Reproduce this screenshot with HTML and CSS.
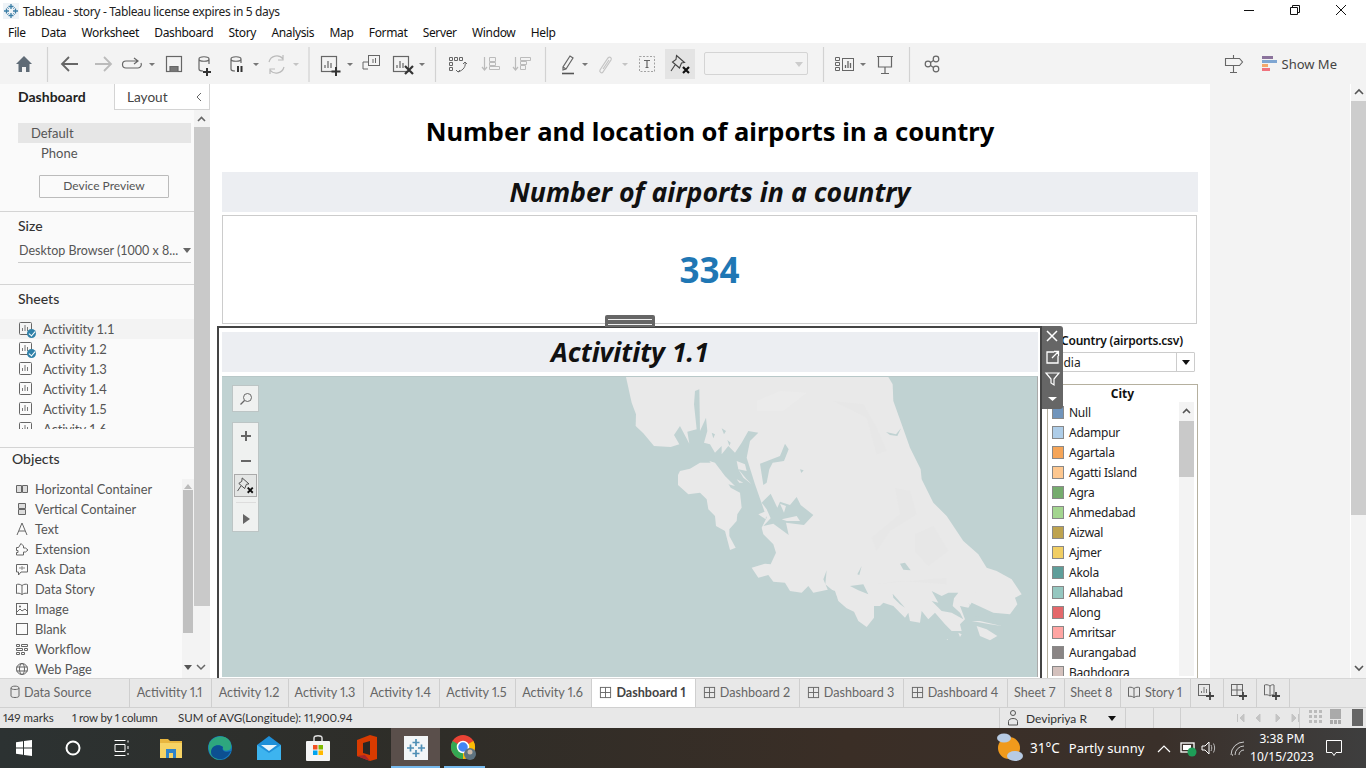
FILE: index.html
```html
<!DOCTYPE html>
<html lang="en">
<head>
<meta charset="utf-8">
<title>Tableau - story</title>
<link rel="stylesheet" href="styles.css">
</head>
<body>
<svg class="defs" width="0" height="0" aria-hidden="true">
  <defs>
    <symbol id="sheet" viewBox="0 0 18 18"><rect x="1.500" y="2.500" width="12" height="12" rx="1" fill="none" stroke="#666"/><path d="M4.500 11V8M7 11V5M9.500 11V7" stroke="#777" fill="none"/></symbol>
    <symbol id="dash" viewBox="0 0 14 14"><rect x="1.500" y="1.500" width="11" height="11" fill="none" stroke="#666"/><path d="M7 1.500v11M1.500 7h11" stroke="#666"/></symbol>
    <symbol id="pin" viewBox="0 0 26 26"><path d="M8.500 3.500L16.500 10.500 13.500 11 11.500 16 4.500 10 8 7.500ZM7 13L3 19" fill="none" stroke="#444" stroke-width="1.100"/><path d="M15 15l6 6M21 15l-6 6" stroke="#111" stroke-width="2.200"/></symbol>
  </defs>
</svg>

<header class="titlebar">
  <svg class="appicon" width="16" height="16" viewBox="0 0 16 16"><rect width="16" height="16" fill="#eef3f7"/><path d="M8 1v5M5.500 3.500h5M8 10v5M5.500 12.500h5M1 8h5M3.500 5.500v5M10 8h5M12.500 5.500v5" stroke="#3b7ea6" stroke-width="1.300"/><path d="M4 4l2 2M12 4l-2 2M4 12l2-2M12 12l-2-2" stroke="#7aa6c2"/></svg>
  <span class="titletext">Tableau - story - Tableau license expires in 5 days</span>
  <div class="winbtns">
    <svg width="46" height="22" viewBox="0 0 46 22"><path d="M18 10.500h10" stroke="#111"/></svg>
    <svg width="46" height="22" viewBox="0 0 46 22"><path d="M18.500 7.500h7v7h-7zM20.500 7V5.500h7v7H26" fill="none" stroke="#111"/></svg>
    <svg width="46" height="22" viewBox="0 0 46 22"><path d="M18 5l10 10M28 5L18 15" stroke="#111"/></svg>
  </div>
</header>

<nav class="menubar">
  <span>File</span><span>Data</span><span>Worksheet</span><span>Dashboard</span><span>Story</span><span>Analysis</span><span>Map</span><span>Format</span><span>Server</span><span>Window</span><span>Help</span>
</nav>

<div class="toolbar">
  <svg class="tbicons" width="950" height="41" viewBox="0 43 950 41">
    <g fill="none" stroke="#666" stroke-width="1.200">
      <path d="M16 64l8-8 8 8h-2.500v8H26v-5h-4v5h-3.500v-8z" fill="#5f6b76" stroke="none"/>
      <path d="M47.500 47v35M309 47v35M435.500 47v35M545.500 47v35M823.500 47v35M909.500 47v35" stroke="#d2d2d2"/>
      <path d="M78 64H63M69 57l-7 7 7 7" stroke="#666" stroke-width="1.800"/>
      <path d="M95 64h15M104 57l7 7-7 7" stroke="#bbb" stroke-width="1.800"/>
      <path d="M137 61h-11a3.500 3.500 0 0 0 0 7h12a3.500 3.500 0 0 0 3-5M134 58l4 3-4 3"/>
      <rect x="166.500" y="56.500" width="15" height="15"/><path d="M170 71.500v-5h8v5" fill="#777"/>
      <path d="M199 59c0-3 10-3 10 0v5M199 59v10c0 1.500 2 2 4 2M199 59c0 3 10 3 10 0"/>
      <path d="M207 68v8M203 72h8" stroke="#333" stroke-width="2"/>
      <path d="M231 59c0-3 10-3 10 0v4M231 59v10c0 1.500 2 2 4 2M231 59c0 3 10 3 10 0"/>
      <path d="M238 66v6M241.500 66v6" stroke="#333" stroke-width="2"/>
      <path d="M269 62a8 8 0 0 1 14-3M284 67a8 8 0 0 1-14 3M283 55v5h-5M270 74v-5h5" stroke="#bbb"/>
      <rect x="321.500" y="56.500" width="15" height="15"/><path d="M325 68v-3M328 68v-7M331 68v-5"/>
      <path d="M336 67v9M331.500 71.500h9" stroke="#333" stroke-width="2"/>
      <rect x="368.500" y="55.500" width="11" height="10" stroke-width="1"/><path d="M368 69h-5v-7h5M373 63v-4M375.500 63v-5" stroke-width="1"/>
      <rect x="393.500" y="56.500" width="15" height="15"/><path d="M397 68v-3M400 68v-7M403 68v-5"/>
      <path d="M405 66l8 8M413 66l-8 8" stroke="#333" stroke-width="2.200"/>
      <path d="M449.500 57.500h3v3h-3zM454.500 57.500h3v3h-3zM459.500 57.500h3v3h-3zM449.500 62.500h3v3h-3zM449.500 67.500h3v3h-3z" stroke-width="1"/>
      <path d="M465 62c1 4-1 8-7 10M456 70l2 2 2-2M463 64l2-2 2 2" stroke-width="1"/>
      <path d="M484.500 57v13M482 67l2.500 3 2.500-3" stroke="#bbb"/><path d="M489.500 57.500h6v4h-6zM489.500 62.500h6v3h-6zM489.500 66.500h10v3h-10z" stroke="#bbb" stroke-width="1"/>
      <path d="M515.500 57v13M513 67l2.500 3 2.500-3" stroke="#bbb"/><path d="M520.500 57.500h10v3h-10zM520.500 61.500h6v3h-6zM520.500 65.500h5v4h-5z" stroke="#bbb" stroke-width="1"/>
      <path d="M563 70l3-1 7-11-3-2-7 11zM566 69l-3-2" stroke="#666"/><path d="M562 73.500h12" stroke="#555" stroke-width="1.600"/>
      <path d="M600 70l8-12c2-2 4 0 3 2l-8 12c-1 2-4 0-3-2zM603 69l6-9" stroke="#c4c4c4"/>
      <rect x="639.500" y="56.500" width="15" height="15" stroke="#999" stroke-width=".9" stroke-dasharray="2 1.500"/><path d="M644 60.500h6M647 60.500v7M645.500 67.500h3" stroke="#666"/>
      <path d="M835.500 57.500h4v3h-4zM835.500 62.500h4v3h-4zM835.500 67.500h4v3h-4z" stroke-width="1"/><rect x="842.500" y="58.500" width="11" height="12" stroke-width="1"/><path d="M845.500 68v-3M848 68v-7M850.500 68v-5" stroke-width="1.300"/>
      <path d="M877 56.500h16M878.500 57v10h13V57M885 67v6M881 73.500h8"/>
      <circle cx="928" cy="64" r="2.800"/><circle cx="936" cy="59" r="2.800"/><circle cx="936" cy="69" r="2.800"/><path d="M930.500 62.500l3-2M930.500 65.500l3 2"/>
    </g>
    <g fill="#777">
      <path d="M149 63h6l-3 3z M253 63h6l-3 3z M347 63h6l-3 3z M419 63h6l-3 3z M582 63h6l-3 3z M860 63h6l-3 3z"/>
      <path d="M293 63h6l-3 3z M622 63h6l-3 3z" fill="#c4c4c4"/>
    </g>
    <rect x="665" y="49" width="30" height="30" fill="#e4e4e4"/>
    <use href="#pin" x="668" y="52" width="26" height="26"/>
  </svg>
  <div class="tbselect"><span class="tbcaret"></span></div>
  <div class="tbright">
    <svg width="22" height="22" viewBox="0 0 22 22"><path d="M2.500 5.500h14l3 3.500-3 3.500h-14zM10.500 2v3M10.500 12.500V19M7 19.500h7" fill="none" stroke="#666" stroke-width="1.100"/></svg>
    <div class="showme">
      <svg width="15" height="16" viewBox="0 0 15 16"><rect width="11" height="3" fill="#8b739c"/><rect y="4" width="15" height="3" fill="#7fa6d2"/><rect y="8" width="6" height="3" fill="#f3a86c"/><rect y="12" width="8" height="3" fill="#f0737e"/></svg>
      <span>Show Me</span>
    </div>
  </div>
</div>

<main class="main">
  <aside class="sidebar">
    <div class="sidetabs">
      <div class="sidetab active">Dashboard</div>
      <div class="sidetab">Layout<svg class="collapse" width="8" height="10" viewBox="0 0 8 10"><path d="M6 1L2 5l4 4" fill="none" stroke="#666"/></svg></div>
    </div>
    <div class="sidebody">
      <div class="sidecol">
        <section class="sec sec-device">
          <div class="devrow sel">Default</div>
          <div class="devrow phone">Phone</div>
          <button class="devbtn">Device Preview</button>
        </section>
        <section class="sec sec-size">
          <h3>Size</h3>
          <div class="sizesel"><span>Desktop Browser (1000 x 8...</span><i class="caret"></i></div>
        </section>
        <section class="sec sec-sheets">
          <h3>Sheets</h3>
          <ul class="sheetlist">
            <li class="hover"><span class="sicon"><svg width="18" height="18"><use href="#sheet"/></svg><b class="check"></b></span>Activitity 1.1</li>
            <li><span class="sicon"><svg width="18" height="18"><use href="#sheet"/></svg><b class="check"></b></span>Activity 1.2</li>
            <li><span class="sicon"><svg width="18" height="18"><use href="#sheet"/></svg></span>Activity 1.3</li>
            <li><span class="sicon"><svg width="18" height="18"><use href="#sheet"/></svg></span>Activity 1.4</li>
            <li><span class="sicon"><svg width="18" height="18"><use href="#sheet"/></svg></span>Activity 1.5</li>
            <li><span class="sicon"><svg width="18" height="18"><use href="#sheet"/></svg></span>Activity 1.6</li>
          </ul>
        </section>
        <section class="sec-objects">
          <h3>Objects</h3>
          <div class="objwrap">
            <ul class="objlist">
              <li><svg width="14" height="14" viewBox="0 0 14 14"><path d="M1.500 3.500h5v7h-5zM7.500 3.500h5v7h-5z" fill="#ddd" stroke="#666"/></svg>Horizontal Container</li>
              <li><svg width="14" height="14" viewBox="0 0 14 14"><path d="M3.500 1.500h7v5h-7zM3.500 7.500h7v5h-7z" fill="#ddd" stroke="#666"/></svg>Vertical Container</li>
              <li><svg width="14" height="14" viewBox="0 0 14 14"><path d="M2 13L7 1l5 12M4 9h6" fill="none" stroke="#666"/></svg>Text</li>
              <li><svg width="14" height="14" viewBox="0 0 14 14"><path d="M1.500 5.500h2L6 1.500l2.500 2.500v2h2l2.500 2-2.500 2h-2v3h-7v-2.500H3V8.500H1.500z" fill="none" stroke="#666"/></svg>Extension</li>
              <li><svg width="14" height="14" viewBox="0 0 14 14"><path d="M1.500 2.500h11v7.500H6l-2.500 3V10h-2z" fill="none" stroke="#666"/><path d="M4 6h6M7 4v4" stroke="#888"/></svg>Ask Data</li>
              <li><svg width="14" height="14" viewBox="0 0 14 14"><path d="M7 3.500C5 2 3 2 1.500 2.500v9C3 11 5 11 7 12.500c2-1.500 4-1.500 5.500-1v-9C11 2 9 2 7 3.500zM7 3.500v9" fill="none" stroke="#666"/></svg>Data Story</li>
              <li><svg width="14" height="14" viewBox="0 0 14 14"><rect x="1.500" y="1.500" width="11" height="11" fill="none" stroke="#666"/><path d="M2 10l3-3 2 2 3-2 2 2" fill="none" stroke="#666"/><circle cx="5" cy="4.500" r="1" fill="#666"/></svg>Image</li>
              <li><svg width="14" height="14" viewBox="0 0 14 14"><rect x="1.500" y="1.500" width="11" height="11" fill="none" stroke="#666"/></svg>Blank</li>
              <li><svg width="14" height="14" viewBox="0 0 14 14"><path d="M1.500 2.500h3v2h-3zM6.500 2.500h6v2h-6zM1.500 6.500h6v2h-6zM9.500 6.500h3v2h-3zM1.500 10.500h3v2h-3zM6.500 10.500h3v2h-3z" fill="none" stroke="#666"/></svg>Workflow</li>
              <li><svg width="14" height="14" viewBox="0 0 14 14"><circle cx="7" cy="7" r="5.500" fill="none" stroke="#666"/><ellipse cx="7" cy="7" rx="2.500" ry="5.500" fill="none" stroke="#666"/><path d="M1.500 5h11M1.500 9h11" stroke="#666"/></svg>Web Page</li>
            </ul>
            <div class="objscroll"><i class="up"></i><b></b><i class="down"></i></div>
          </div>
        </section>
      </div>
      <div class="sidescroll">
        <svg width="15" height="16" viewBox="0 0 15 16"><path d="M4 10l3.500-3.500L11 10" fill="none" stroke="#666" stroke-width="1.600"/></svg>
        <div class="sidethumb"></div>
        <svg class="sidedown" width="15" height="12" viewBox="0 0 15 12"><path d="M3 3l4 4 4-4" fill="none" stroke="#666" stroke-width="1.500"/></svg>
      </div>
    </div>
  </aside>

  <section class="canvas">
    <h1 class="dashtitle">Number and location of airports in a country</h1>
    <h2 class="band">Number of airports in a country</h2>
    <div class="kpi">334</div>
    <div class="handle"></div>
    <div class="lower">
      <div class="frame">
        <h2 class="band framed">Activitity 1.1</h2>
        <div class="map">
          <svg class="mapsvg" width="816" height="301" viewBox="222 376 816 301">
            <g transform="translate(600 370) scale(.33333)">
              <g fill="#e9e9e9">
                <path d="M78 18H865L878 40 880 90 905 160 930 230 962 295 965 325 1000 395 1040 435 1090 510 1135 550 1160 590 1190 600 1235 625 1265 670 1245 680 1252 700 1230 730 1180 725 1115 695 1105 710 1080 705 1095 745 1080 760 1085 780 1055 780 1035 760 1005 725 985 745 965 720 960 755 930 750 925 725 915 740 900 725 880 705 850 695 840 705 822 705 822 740 800 768 775 750 762 722 740 712 715 690 705 660 690 655 640 665 625 645 605 665 570 660 555 635 520 632 505 612 475 620 455 590 495 578 512 580 528 545 520 520 490 490 485 470 500 440 465 340 440 260 450 210 475 185 445 180 425 215 405 245 385 225 365 250 365 225 345 245 330 220 312 215 322 180 318 140 300 180 298 55 285 60 282 100 290 175 262 182 268 218 240 165 222 192 238 220 212 228 162 225 130 187 107 165 108 130 95 95Z"/>
                <path d="M240 300 270 293 300 275 340 275 362 300 392 350 420 365 425 410 412 430 410 450 388 475 388 495 407 530 390 537 375 480 348 465 345 435 325 415 320 385 300 365 265 370 234 342 234 312Z"/>
                <path d="M328 270 345 275 375 315 405 345 385 340 360 315Z M410 270 435 280 440 300 415 295Z M415 295 440 325 455 340 430 320Z M410 325 430 335 418 335Z"/>
              </g>
              <g fill="#c0d2d2">
                <path d="M335 185 345 190 340 202Z M365 172 378 180 372 190Z M382 207 392 215 388 224Z"/>
                <path d="M480 278 515 265 540 255 555 218 566 235 552 270 518 275 508 295 500 335 490 342Z"/>
                <path d="M600 295 611 298 604 306Z M900 578 915 575 932 598 910 596Z M858 183 888 190 903 172 892 195 870 192Z"/>
                <path d="M512 368 520 385 532 410 540 392 570 402 590 378 602 402 640 432 612 462 558 455 566 492 520 458 490 465 512 442 500 415 485 395Z"/>
                <path d="M750 645 790 640 805 670 775 658Z M772 610 785 585 778 612Z"/>
                <path d="M670 625 680 598 676 640 700 660 712 680 690 672Z"/>
                <path d="M995 660 1025 675 1045 665 1075 665 1062 682 1058 705 1080 725 1090 745 1055 725 1025 720 995 690 1015 695Z M878 668 915 710 900 700 880 680Z M1105 695 1125 725 1170 735 1205 760 1170 745 1125 735Z"/>
              </g>
              <g fill="#e9e9e9">
                <path d="M545 445 590 435 600 450 560 450Z M475 430 500 420 497 445Z M540 398 558 405 552 425Z"/>
                <path d="M1130 765 1160 775 1192 795 1170 808 1140 795Z M1115 750 1140 750 1205 765 1170 760Z M1075 785 1085 790 1080 798Z M1128 655 1135 665 1122 662Z M1040 804 1044 804 1042 807Z"/>
              </g>
              <path d="M700 90 790 100 830 170 860 240 830 250 800 140ZM885 350 930 360 950 430 870 480 830 540 815 500 900 430ZM945 490 1000 465 1045 540 985 585 945 540ZM820 640 1040 620 1040 640 900 630Z" fill="#e7e7e7"/>
              <path d="M540 60 620 65 550 120 470 120 470 90Z" fill="#ebebeb"/>
            </g>
          </svg>
          <div class="mapctl search">
            <svg width="16" height="16" viewBox="0 0 16 16"><circle cx="9.500" cy="6.500" r="4" fill="none" stroke="#666"/><path d="M6.500 9.500L2.500 13.500" stroke="#666" stroke-width="1.300"/></svg>
          </div>
          <div class="mapctl group">
            <svg class="ctl-plus" width="12" height="12" viewBox="0 0 12 12"><path d="M6 1v10M1 6h10" stroke="#666" stroke-width="2"/></svg>
            <svg class="ctl-minus" width="12" height="12" viewBox="0 0 12 12"><path d="M1 6h10" stroke="#666" stroke-width="2"/></svg>
            <div class="ctl-pin"><svg width="22" height="22"><use href="#pin"/></svg></div>
            <div class="ctl-sep"></div>
            <svg class="ctl-play" width="10" height="12" viewBox="0 0 10 12"><path d="M2 1l7 5-7 5z" fill="#666"/></svg>
          </div>
        </div>
      </div>
      <div class="rightcol">
        <div class="filtertitle">Country (airports.csv)</div>
        <div class="combo"><span class="combotext">India</span><span class="combobtn"><i class="caret dark"></i></span></div>
        <div class="legend">
          <div class="legendtitle">City</div>
          <div class="legendbody">
            <ul class="legendlist">
              <li><i class="sw s1"></i>Null</li>
              <li><i class="sw s2"></i>Adampur</li>
              <li><i class="sw s3"></i>Agartala</li>
              <li><i class="sw s4"></i>Agatti Island</li>
              <li><i class="sw s5"></i>Agra</li>
              <li><i class="sw s6"></i>Ahmedabad</li>
              <li><i class="sw s7"></i>Aizwal</li>
              <li><i class="sw s8"></i>Ajmer</li>
              <li><i class="sw s9"></i>Akola</li>
              <li><i class="sw s10"></i>Allahabad</li>
              <li><i class="sw s11"></i>Along</li>
              <li><i class="sw s12"></i>Amritsar</li>
              <li><i class="sw s13"></i>Aurangabad</li>
              <li><i class="sw s14"></i>Baghdogra</li>
            </ul>
            <div class="legscroll">
              <svg width="15" height="19" viewBox="0 0 15 19"><path d="M4 11l3.500-3.500L11 11" fill="none" stroke="#555" stroke-width="1.600"/></svg>
              <div class="legthumb"></div>
            </div>
          </div>
        </div>
      </div>
      <div class="zonebar">
        <svg width="21" height="21" viewBox="0 0 21 21"><path d="M5 5l10 10M15 5L5 15" stroke="#fff" stroke-width="1.500"/></svg>
        <svg width="21" height="21" viewBox="0 0 21 21"><path d="M12 5H5v11h11V9M10 11l6-6M12 4.500h4.500V9" fill="none" stroke="#fff" stroke-width="1.300"/></svg>
        <svg width="21" height="22" viewBox="0 0 21 22"><path d="M4 5h13l-5 6v6l-3-2v-4z" fill="none" stroke="#fff" stroke-width="1.200"/></svg>
        <svg width="21" height="18" viewBox="0 0 21 18"><path d="M6 7h9l-4.500 4z" fill="#fff"/></svg>
      </div>
    </div>
  </section>

  <div class="gutter"></div>
  <div class="pagescroll">
    <svg width="16" height="17" viewBox="0 0 16 17"><path d="M4 10l4-4 4 4" fill="none" stroke="#555" stroke-width="1.600"/></svg>
    <div class="pagethumb"></div>
    <svg class="pagedown" width="16" height="16" viewBox="0 0 16 16"><path d="M4 6l4 4 4-4" fill="none" stroke="#555" stroke-width="1.600"/></svg>
  </div>
</main>

<div class="tabs">
  <div class="tab w-ds"><svg width="12" height="14" viewBox="0 0 12 14"><path d="M2 3c0-2.500 8-2.500 8 0v8c0 2-8 2-8 0zM2 3c0 2 8 2 8 0" fill="none" stroke="#666"/></svg>Data Source</div>
  <div class="tab w-a0">Activitity 1.1</div>
  <div class="tab w-a1">Activity 1.2</div>
  <div class="tab w-a2">Activity 1.3</div>
  <div class="tab w-a3">Activity 1.4</div>
  <div class="tab w-a3">Activity 1.5</div>
  <div class="tab w-a3">Activity 1.6</div>
  <div class="tab w-d current"><svg width="13" height="13"><use href="#dash"/></svg>Dashboard 1</div>
  <div class="tab w-d"><svg width="13" height="13"><use href="#dash"/></svg>Dashboard 2</div>
  <div class="tab w-d"><svg width="13" height="13"><use href="#dash"/></svg>Dashboard 3</div>
  <div class="tab w-d"><svg width="13" height="13"><use href="#dash"/></svg>Dashboard 4</div>
  <div class="tab w-s">Sheet 7</div>
  <div class="tab w-s">Sheet 8</div>
  <div class="tab w-st"><svg width="14" height="14" viewBox="0 0 14 14"><path d="M7 3.500C5 2 3 2 1.500 2.500v9C3 11 5 11 7 12.500c2-1.500 4-1.500 5.500-1v-9C11 2 9 2 7 3.500zM7 3.500v9" fill="none" stroke="#666"/></svg>Story 1</div>
  <div class="tab w-n"><svg width="18" height="18" viewBox="0 0 18 18"><rect x="1.500" y="1.500" width="11" height="11" fill="none" stroke="#666"/><path d="M4.500 10V8M7 10V4M9.500 10V6" stroke="#777"/><path d="M13 9v8M9 13h8" stroke="#444" stroke-width="1.800"/></svg></div>
  <div class="tab w-n"><svg width="18" height="18" viewBox="0 0 18 18"><rect x="1.500" y="1.500" width="11" height="11" fill="none" stroke="#666"/><path d="M7 1.500v11M1.500 7h11" stroke="#666"/><path d="M13 9v8M9 13h8" stroke="#444" stroke-width="1.800"/></svg></div>
  <div class="tab w-n"><svg width="18" height="18" viewBox="0 0 18 18"><path d="M7 3C5 1.500 3 1.500 1.500 2v10C3 11.500 5 11.500 7 13c2-1.500 3-1.500 4-1V2C10 1.500 9 1.500 7 3zM7 3v10" fill="none" stroke="#666"/><path d="M13 9v8M9 13h8" stroke="#444" stroke-width="1.800"/></svg></div>
</div>

<div class="status">
  <span class="st1">149 marks</span><span class="st2">1 row by 1 column</span><span class="st3">SUM of AVG(Longitude): 11,900.94</span>
  <div class="stuser">
    <svg width="14" height="18" viewBox="0 0 14 18"><circle cx="7" cy="4" r="2.500" fill="none" stroke="#555"/><path d="M2.500 16v-3.500c0-2 2-3 4.500-3s4.500 1 4.500 3V16z" fill="none" stroke="#555"/></svg>
    <span class="stname">Devipriya R</span><i class="caret dark"></i>
  </div>
  <div class="stcell c1"></div><div class="stcell c2"></div>
  <div class="stnav">
    <svg width="70" height="12" viewBox="0 0 70 12"><path d="M2.500 2v8M9 2L5 6l4 4zM25 2l-4 4 4 4zM41 2l4 4-4 4zM57 2l4 4-4 4zM63.500 2v8" fill="#c4c4c4" stroke="#c4c4c4"/></svg>
  </div>
  <div class="stview">
    <svg width="60" height="18" viewBox="0 0 60 18"><path d="M1 1h3v3H1zM6 1h3v3H6zM11 1h3v3h-3zM1 6h3v3H1zM6 6h3v3H6zM11 6h3v3h-3zM1 11h3v3H1zM6 11h3v3H6zM11 11h3v3h-3z" fill="#bbb"/><path d="M22 0h11v10H22zM22 11h3v4h-3zM26 11h3v4h-3zM30 11h3v4h-3z" fill="#aaa"/><rect x="44" y="0" width="11" height="17" fill="#666"/></svg>
  </div>
</div>

<footer class="taskbar">
  <div class="tk"><svg width="16" height="16" viewBox="0 0 16 16"><path d="M0 2.200L7 1.200V7.500H0zM8 1L16 0V7.500H8zM0 8.500H7V14.800L0 13.800zM8 8.500H16V16L8 15z" fill="#fff"/></svg></div>
  <div class="tk"><svg width="16" height="16" viewBox="0 0 16 16"><circle cx="8" cy="8" r="6.500" fill="none" stroke="#fff" stroke-width="2"/></svg></div>
  <div class="tk"><svg width="16" height="16" viewBox="0 0 16 16"><path d="M.5 .5h11M.5 15.500h11M1 4.500h10v7H1zM14 .5v2M14 6v3M14 13v2" fill="none" stroke="#fff"/></svg></div>
  <div class="tk"><svg width="22" height="20" viewBox="0 0 22 20"><path d="M0 1h8l2 2h12v5H0z" fill="#e8b63f"/><rect y="5" width="22" height="15" fill="#f6d365"/><rect x="6" y="11" width="10" height="9" fill="#2f83c9"/><rect x="9" y="15" width="4" height="5" fill="#f6d365"/></svg></div>
  <div class="tk"><svg width="24" height="24" viewBox="0 0 24 24"><circle cx="12" cy="12" r="12" fill="#1479c0"/><path d="M1 8C4 0 16-2 21 4c3 4 3 9 0 10-4 2-7 0-6-3-3-3-10-2-11 4-1 5 5 8 10 8C6 26-1 17 1 8z" fill="#2ea77e"/><path d="M3 16c0-6 7-9 12-5-2 4 3 6 8 4-3 6-8 9-13 8-4-1-7-3-7-7z" fill="#0c4f91"/></svg></div>
  <div class="tk"><svg width="24" height="24" viewBox="0 0 24 24"><path d="M0 9L12 0l12 9v15H0z" fill="#1f8fd8"/><path d="M0 9l12 8 12-8v15H0z" fill="#3db4ef"/><path d="M4 9h16l-8 6z" fill="#e8f4fb"/></svg></div>
  <div class="tk"><svg width="24" height="26" viewBox="0 0 24 26"><path d="M8 7V3c0-3 8-3 8 0v4" fill="none" stroke="#ddd" stroke-width="1.500"/><rect y="6" width="24" height="20" rx="1" fill="#f4f4f4"/><rect x="7" y="10" width="4.500" height="4.500" fill="#f25022"/><rect x="12.500" y="10" width="4.500" height="4.500" fill="#7fba00"/><rect x="7" y="15.500" width="4.500" height="4.500" fill="#00a4ef"/><rect x="12.500" y="15.500" width="4.500" height="4.500" fill="#ffb900"/></svg></div>
  <div class="tk"><svg width="20" height="26" viewBox="0 0 20 26"><path d="M0 5L13 0l7 2v22l-7 2L0 21z" fill="#d83b01"/><path d="M6 8l7-2v14l-7-2z" fill="#2b2723"/><path d="M0 21l13 5-5-6z" fill="#a4262c"/></svg></div>
  <div class="tk active"><svg width="24" height="24" viewBox="0 0 24 24"><rect width="24" height="24" fill="#f2f5f7"/><path d="M12 3v7M8.500 6.500h7M12 14v7M8.500 17.500h7M3 12h7M6.500 8.500v7M14 12h7M17.500 8.500v7" stroke="#4f8fb5" stroke-width="1.700"/></svg></div>
  <div class="tk open"><svg width="26" height="26" viewBox="0 0 26 26"><circle cx="12" cy="12" r="12" fill="#ea4335"/><path d="M12 12L22.400 6A12 12 0 0 1 12 24z" fill="#fbbc05"/><path d="M12 12L12 24A12 12 0 0 1 1.600 6z" fill="#34a853"/><circle cx="12" cy="12" r="5.500" fill="#4285f4" stroke="#fff" stroke-width="1.500"/><circle cx="19" cy="19" r="6" fill="#5e7380"/><circle cx="19" cy="17" r="2.500" fill="#c9b8a8"/></svg></div>
  <div class="tray">
    <svg class="weather" width="28" height="32" viewBox="0 0 28 32"><circle cx="13" cy="16" r="11" fill="#f09a1c"/><ellipse cx="8" cy="6" rx="7" ry="4.500" fill="#b7cbe3"/><ellipse cx="19" cy="24" rx="8" ry="5" fill="#b7cbe3"/></svg>
    <span class="temp">31°C</span><span class="cond">Partly sunny</span>
    <svg class="chev" width="14" height="9" viewBox="0 0 14 9"><path d="M1 8l6-6 6 6" fill="none" stroke="#fff" stroke-width="1.200"/></svg>
    <svg class="ti1" width="18" height="16" viewBox="0 0 18 16"><rect x="1" y="2" width="13" height="9" fill="none" stroke="#fff" stroke-width="1.300"/><rect x="3" y="4" width="8" height="5" fill="#fff"/><circle cx="12" cy="11" r="4.500" fill="#1e9e57"/></svg>
    <svg class="ti2" width="16" height="16" viewBox="0 0 16 16"><path d="M1 6h3l4-4v12l-4-4H1z" fill="none" stroke="#fff"/><path d="M10 5c1 2 1 4 0 6M12.500 3.500c1.500 3 1.500 6 0 9" fill="none" stroke="#bbb"/></svg>
    <svg class="ti3" width="16" height="16" viewBox="0 0 16 16"><path d="M1 14A13 13 0 0 1 14 1M5 14a9 9 0 0 1 9-9M9 14a5 5 0 0 1 5-5" fill="none" stroke="#ccc"/><path d="M2 14l1 0" stroke="#fff"/></svg>
    <div class="clock"><span>3:38 PM</span><span>10/15/2023</span></div>
    <svg class="notif" width="18" height="18" viewBox="0 0 18 18"><path d="M1.500 1.500h15v12H11l-2 3-2-3H1.500z" fill="none" stroke="#fff"/></svg>
  </div>
</footer>
</body>
</html>
```

FILE: styles.css
```css
* { box-sizing: border-box; }
html, body { margin: 0; padding: 0; }
body {
  width: 1366px; height: 768px; overflow: hidden;
  display: flex; flex-direction: column;
  font-family: "Noto Sans", "Open Sans", sans-serif;
  font-size: 12px; color: #222; background: #fff;
}
ul { list-style: none; margin: 0; padding: 0; }
h1, h2, h3 { margin: 0; }
svg { display: block; flex: none; }
.defs { position: absolute; }

.titlebar { height: 22px; flex: none; display: flex; align-items: center; padding-left: 3px; font-size: 12px; letter-spacing: -.35px; }
.appicon { margin-right: 4px; }
.titletext { color: #222; padding-top: 1px; }
.winbtns { margin-left: auto; display: flex; margin-right: 2px; }

.menubar { height: 21px; flex: none; display: flex; align-items: center; padding-left: 8px; gap: 15.300px; font-size: 12px; color: #111; letter-spacing: -.35px; }

.toolbar { height: 41px; flex: none; background: #f3f3f3; display: flex; align-items: center; position: relative; }
.tbicons { position: absolute; left: 0; top: 0; }
.tbselect { margin-left: 704px; width: 104px; height: 23px; border: 1px solid #d4d4d4; border-radius: 2px; background: #f3f3f3; position: relative; z-index: 1; }
.tbcaret { position: absolute; right: 4px; top: 9px; border: 4px solid transparent; border-top: 5px solid #ccc; }
.tbright { margin-left: auto; display: flex; align-items: center; gap: 17px; padding-right: 29px; }
.showme { display: flex; align-items: center; gap: 5px; font-size: 13px; color: #444; }

.main { flex: 1; min-height: 0; display: flex; overflow: hidden; }

.sidebar { width: 210px; flex: none; display: flex; flex-direction: column; background: #fafafa; }
.sidetabs { height: 26px; flex: none; display: flex; font-family: Lato, sans-serif; font-size: 14px; background: #fff; }
.sidetab { display: flex; align-items: center; color: #444; position: relative; }
.sidetab.active { width: 114px; padding: 0 0 2px 18px; font-weight: 700; color: #222; background: #fafafa; }
.sidetab:not(.active) { width: 96px; padding-left: 12px; font-size: 13.600px; border: 1px solid #d4d4d4; border-top: 0; background: #fff; }
.collapse { position: absolute; right: 6px; top: 8px; }
.sidebody { flex: 1; min-height: 0; display: flex; }
.sidecol { width: 194px; flex: none; display: flex; flex-direction: column; font-family: Lato, sans-serif; font-size: 12.800px; color: #555; }
.sec { border-bottom: 1px solid #d4d4d4; }
.sec h3, .sec-objects h3 { font-size: 14px; font-weight: 500; color: #333; line-height: 18px; }
.sec-device { height: 102px; padding: 13px 3px 0 18px; }
.devrow { height: 20px; line-height: 20px; font-size: 13px; }
.devrow.sel { background: #e6e6e6; padding-left: 13px; }
.devrow.phone { padding-left: 23px; }
.devbtn { display: block; margin: 12px 0 0 21px; width: 130px; height: 23px; background: #fafafa; border: 1px solid #bbb; border-radius: 1px; font: 12px Lato, sans-serif; color: #555; padding: 0 0 2px; }
.sec-size { height: 73px; padding: 5px 3px 0 18px; }
.sizesel { display: flex; align-items: center; justify-content: space-between; height: 24px; margin-top: 4px; padding-left: 1px; border-bottom: 1px solid #ccc; font-size: 12.500px; }
.caret { display: block; width: 0; height: 0; border: 4px solid transparent; border-top: 5px solid #666; border-bottom: 0; }
.caret.dark { border-top-color: #111; }
.sec-sheets { height: 163px; padding: 5px 0 0 18px; }
.sheetlist { margin: 11px 0 0 -18px; height: 110px; overflow: hidden; font-size: 13px; letter-spacing: -.1px; }
.sheetlist li { height: 20px; display: flex; align-items: center; padding: 0 0 1px 18px; }
.sheetlist li.hover { background: #f3f3f3; }
.sicon { position: relative; width: 25px; }
.check { position: absolute; left: 9px; top: 9px; width: 9px; height: 9px; border-radius: 50%; background: #2f80a8; }
.check::after { content: ""; position: absolute; left: 3px; top: 1px; width: 3px; height: 5px; border: solid #fff; border-width: 0 1px 1px 0; transform: rotate(40deg); }
.sec-objects { flex: 1; min-height: 0; padding: 2px 0 0; }
.sec-objects h3 { padding-left: 12px; }
.objwrap { margin-top: 11px; display: flex; }
.objlist { flex: 1; height: 200px; padding-left: 15px; }
.objlist li { height: 20px; display: flex; align-items: center; gap: 6px; }
.objscroll { width: 12px; height: 200px; background: #f3f3f3; display: flex; flex-direction: column; align-items: center; padding-top: 5px; }
.objscroll .up { border: 4px solid transparent; border-bottom: 5px solid #bbb; border-top: 0; }
.objscroll b { width: 10px; height: 143px; background: #c0c0c0; margin-top: 1px; }
.objscroll .down { border: 4px solid transparent; border-top: 5px solid #555; border-bottom: 0; margin-top: 32px; }
.sidescroll { width: 16px; flex: none; background: #f3f3f3; position: relative; padding-top: 1px; }
.sidethumb { height: 479px; background: #c9c9c9; }
.sidedown { position: absolute; left: 0; top: 552px; }

.canvas { width: 1000px; flex: none; padding: 0 12px; background: #fff; position: relative; }
.dashtitle { height: 88px; display: flex; align-items: center; justify-content: center; font-size: 25.500px; font-weight: 700; color: #000; padding-top: 6px; }
.band { height: 40px; padding-bottom: 2px; background: #eceef2; display: flex; align-items: center; justify-content: center; font-size: 26.700px; font-weight: 700; font-style: italic; color: #111; }
.kpi { height: 109px; width: 975px; margin-top: 3px; border: 1px solid #ccc; display: flex; align-items: center; justify-content: center; font-size: 35px; font-weight: 700; color: #1f77b4; }
.handle { position: absolute; left: 395px; top: 231px; width: 50px; height: 12px; background: #666; border-radius: 2px 2px 0 0; z-index: 3; }
.handle::after { content: ""; position: absolute; left: 3px; right: 3px; top: 4px; height: 4px; border-top: 1px solid #eee; border-bottom: 1px solid #eee; }
.lower { display: flex; margin: 2px 0 0 -5px; position: relative; align-items: flex-start; }
.frame { width: 825px; height: 360px; border: 2px solid #444; border-bottom: 0; padding: 4px 2px 0 3px; flex: none; }
.framed { width: 816px; }
.map { width: 816px; height: 301px; margin-top: 4px; background: #c0d2d2; position: relative; border-right: 1px solid #aaa; border-top: 1px solid #b8c8c8; overflow: hidden; }
.mapsvg { position: absolute; left: 0; top: 0; }
.mapctl { position: absolute; left: 10px; width: 27px; background: #eff1f0; border: 1px solid #bcc5c5; }
.search { top: 8px; height: 27px; display: flex; align-items: center; justify-content: center; }
.group { top: 45px; height: 110px; display: flex; flex-direction: column; align-items: center; }
.ctl-plus { margin-top: 7px; }
.ctl-minus { margin-top: 13px; }
.ctl-pin { margin-top: 7px; width: 23px; height: 23px; border: 1px solid #aaa; background: #e4e6e5; }
.ctl-sep { width: 20px; height: 1px; background: #ddd; margin-top: 5px; }
.ctl-play { margin-top: 10px; }

.rightcol { flex: none; width: 151px; margin-left: 5px; }
.filtertitle { height: 26px; padding: 7px 0 0 14px; font-size: 12px; font-weight: 600; line-height: 16px; color: #111; white-space: nowrap; letter-spacing: -.2px; }
.combo { height: 20px; border: 1px solid #ccc; border-radius: 1px; width: 148px; display: flex; justify-content: space-between; align-items: center; padding-left: 4px; font-size: 12px; }
.combobtn { width: 18px; height: 18px; border-left: 1px solid #ccc; display: flex; align-items: center; justify-content: center; }
.legend { margin-top: 12px; border: 1px solid #b5b09f; border-bottom: 0; height: 300px; }
.legendtitle { height: 17px; text-align: center; font-weight: 700; line-height: 18px; color: #111; }
.legendbody { display: flex; height: 274px; overflow: hidden; }
.legendlist { width: 131px; letter-spacing: -.25px; }
.legendlist li { height: 20px; display: flex; align-items: center; padding-left: 4px; gap: 5px; color: #222; }
.sw { width: 12px; height: 13px; border: 1px solid #888; flex: none; }
.s1 { background: #7094bb; } .s2 { background: #aecde8; } .s3 { background: #f5a558; } .s4 { background: #fdc78f; }
.s5 { background: #76ac6e; } .s6 { background: #a3d58f; } .s7 { background: #bea34f; } .s8 { background: #f1ce63; }
.s9 { background: #5f9e9a; } .s10 { background: #95c7c0; } .s11 { background: #e4686b; } .s12 { background: #ffa5a3; }
.s13 { background: #8a8585; } .s14 { background: #d4c1bd; }
.legscroll { width: 15px; background: #f3f3f3; }
.legthumb { height: 56px; background: #c9c9c9; }
.zonebar { position: absolute; left: 825px; top: 0; width: 21px; height: 83px; background: #666; border-radius: 0 3px 3px 0; z-index: 4; display: flex; flex-direction: column; }

.gutter { width: 140px; flex: none; background: #f3f3f3; }
.pagescroll { width: 16px; flex: none; background: #f3f3f3; border-left: 1px solid #fff; position: relative; }
.pagethumb { height: 414px; background: #cdcdcd; }
.pagedown { position: absolute; left: 0; top: 576px; }

.tabs { height: 30px; flex: none; display: flex; background: #e8e8e8; border-top: 1px solid #d6d6d6; border-bottom: 1px solid #d0d0d0; font-family: Lato, sans-serif; font-size: 12.600px; color: #666; font-variant-numeric: proportional-nums; }
.tab { display: flex; align-items: center; justify-content: center; gap: 4px; padding: 0 2px 2px 0; border-right: 1px solid #cfcfcf; white-space: nowrap; }
.w-ds { width: 130px; justify-content: flex-start; padding-left: 9px; gap: 3px; }
.w-a0 { width: 82px; } .w-a1 { width: 77px; } .w-a2 { width: 75px; } .w-a3 { width: 76px; }
.w-d { width: 104px; } .w-s { width: 56.500px; } .w-st { width: 70px; } .w-n { width: 33px; }
.tab.current { background: #fff; color: #444; font-weight: 700; }

.status { height: 20px; flex: none; display: flex; align-items: center; padding-bottom: 1px; background: #e8e8e8; font-family: Lato, sans-serif; font-size: 11.500px; color: #333; position: relative; white-space: nowrap; font-variant-numeric: proportional-nums; }
.st1 { margin-left: 3px; width: 69px; }
.st2 { width: 106px; letter-spacing: -.2px; }
.stuser { position: absolute; left: 999px; top: 0; height: 20px; width: 127px; border-left: 1px solid #cfcfcf; border-right: 1px solid #cfcfcf; display: flex; align-items: center; padding-left: 6px; gap: 6px; }
.stname { width: 76px; font-size: 12px; }
.stuser .caret { margin-left: 0; }
.stcell { position: absolute; top: 0; height: 20px; width: 27px; border-right: 1px solid #cfcfcf; }
.c1 { left: 1127px; } .c2 { left: 1154px; }
.stnav { position: absolute; left: 1235px; top: 4px; }
.stview { position: absolute; left: 1299px; top: 0; height: 20px; border-left: 1px solid #cfcfcf; padding: 1px 0 0 8px; }

.taskbar { height: 40px; flex: none; display: flex; align-items: center; color: #fff; background: linear-gradient(90deg, #2c3232 0%, #2e2d28 30%, #3a2e26 62%, #3a302a 85%, #3e3e3e 100%); position: relative; }
.tk { width: 48.900px; height: 40px; flex: none; display: flex; align-items: center; justify-content: center; position: relative; }
.tk.active { background: #5a4f4b; }
.tk.active::after, .tk.open::after { content: ""; position: absolute; left: 0; right: 0; bottom: 0; height: 2px; background: #76b9ed; }
.tk.open::after { left: 4px; right: 4px; }
.tray { margin-left: auto; height: 40px; display: flex; align-items: center; width: 370px; position: relative; font-size: 14px; }
.weather { margin-left: 0; }
.temp { margin-left: 6px; font-size: 13.500px; }
.cond { margin-left: 9px; font-size: 13px; white-space: nowrap; }
.chev { position: absolute; left: 161px; top: 16px; }
.ti1 { position: absolute; left: 184px; top: 13px; }
.ti2 { position: absolute; left: 205px; top: 12px; }
.ti3 { position: absolute; left: 234px; top: 13px; }
.clock { position: absolute; left: 245px; top: 2px; width: 82px; display: flex; flex-direction: column; align-items: center; font-size: 12px; line-height: 18px; }
.notif { position: absolute; left: 329px; top: 11px; }
```
